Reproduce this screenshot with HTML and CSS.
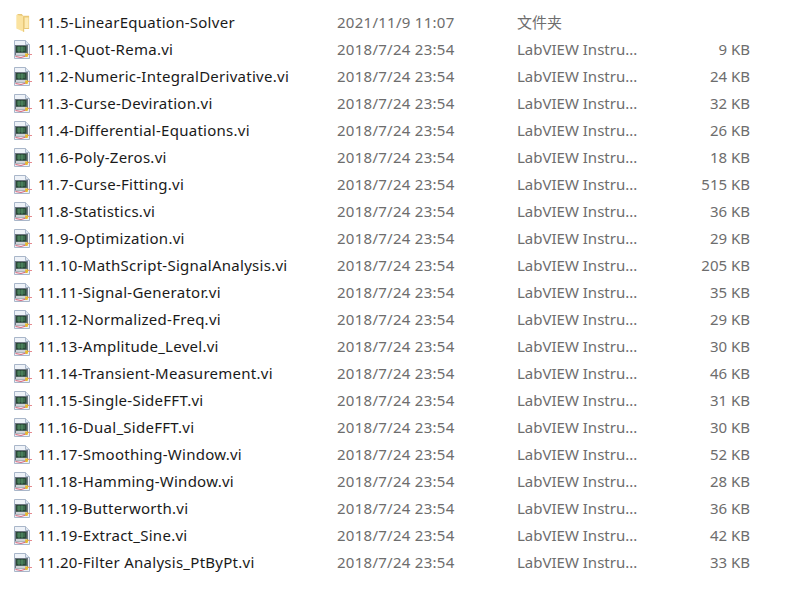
FILE: index.html
```html
<!DOCTYPE html>
<html lang="zh">
<head>
<meta charset="utf-8">
<title>Files</title>
<link rel="stylesheet" href="styles.css">
</head>
<body>
<svg class="defs" width="0" height="0">
<symbol id="folder" viewBox="0 0 16 18">
<path d="M3 1h4l1 1.500h5.500v12H3z" fill="#e9c878"/>
<path d="M2 1.500l7 1.500v14l-7-3z" fill="#fbe3a0"/>
<path d="M9 3v14l-1-.4V3z" fill="#e8c878"/>
<path d="M9.500 4h3.500v9.500H9.500z" fill="#fdebb4"/>
</symbol>
<symbol id="vi" viewBox="0 0 20 20">
<path d="M1.500 .5h11l4 4v14h-15z" fill="#eef2f8" stroke="#a9b6c9"/>
<path d="M12.500 .5v4h4" fill="#dfe6f0" stroke="#a9b6c9"/>
<rect x="2" y="5" width="13" height="10.500" fill="#6d7680"/>
<rect x="3" y="6" width="10.500" height="6.500" fill="#2a4a38"/>
<path d="M4 8h8M4 10h8M6 6.500v6M9 6.500v6" stroke="#63a877" stroke-width=".7"/>
<rect x="3" y="13" width="11" height="2" fill="#cfd3d8"/>
<path d="M2.500 16.500l5.500 1 5-1.500" stroke="#d9667a" stroke-width="1" fill="none"/>
<path d="M14 14.500h5" stroke="#e58a90" stroke-width="1"/>
<path d="M12 13.500h3.500l-1 3.500h-2z" fill="#e7bd2f"/>
</symbol>
</svg>
<main class="list">
<div class="row"><svg class="icon"><use href="#folder"/></svg><span class="name">11.5-LinearEquation-Solver</span><span class="date">2021/11/9 11:07</span><span class="type">文件夹</span><span class="size"></span></div>
<div class="row"><svg class="icon"><use href="#vi"/></svg><span class="name">11.1-Quot-Rema.vi</span><span class="date">2018/7/24 23:54</span><span class="type">LabVIEW Instru...</span><span class="size">9 KB</span></div>
<div class="row"><svg class="icon"><use href="#vi"/></svg><span class="name">11.2-Numeric-IntegralDerivative.vi</span><span class="date">2018/7/24 23:54</span><span class="type">LabVIEW Instru...</span><span class="size">24 KB</span></div>
<div class="row"><svg class="icon"><use href="#vi"/></svg><span class="name">11.3-Curse-Deviration.vi</span><span class="date">2018/7/24 23:54</span><span class="type">LabVIEW Instru...</span><span class="size">32 KB</span></div>
<div class="row"><svg class="icon"><use href="#vi"/></svg><span class="name">11.4-Differential-Equations.vi</span><span class="date">2018/7/24 23:54</span><span class="type">LabVIEW Instru...</span><span class="size">26 KB</span></div>
<div class="row"><svg class="icon"><use href="#vi"/></svg><span class="name">11.6-Poly-Zeros.vi</span><span class="date">2018/7/24 23:54</span><span class="type">LabVIEW Instru...</span><span class="size">18 KB</span></div>
<div class="row"><svg class="icon"><use href="#vi"/></svg><span class="name">11.7-Curse-Fitting.vi</span><span class="date">2018/7/24 23:54</span><span class="type">LabVIEW Instru...</span><span class="size">515 KB</span></div>
<div class="row"><svg class="icon"><use href="#vi"/></svg><span class="name">11.8-Statistics.vi</span><span class="date">2018/7/24 23:54</span><span class="type">LabVIEW Instru...</span><span class="size">36 KB</span></div>
<div class="row"><svg class="icon"><use href="#vi"/></svg><span class="name">11.9-Optimization.vi</span><span class="date">2018/7/24 23:54</span><span class="type">LabVIEW Instru...</span><span class="size">29 KB</span></div>
<div class="row"><svg class="icon"><use href="#vi"/></svg><span class="name">11.10-MathScript-SignalAnalysis.vi</span><span class="date">2018/7/24 23:54</span><span class="type">LabVIEW Instru...</span><span class="size">205 KB</span></div>
<div class="row"><svg class="icon"><use href="#vi"/></svg><span class="name">11.11-Signal-Generator.vi</span><span class="date">2018/7/24 23:54</span><span class="type">LabVIEW Instru...</span><span class="size">35 KB</span></div>
<div class="row"><svg class="icon"><use href="#vi"/></svg><span class="name">11.12-Normalized-Freq.vi</span><span class="date">2018/7/24 23:54</span><span class="type">LabVIEW Instru...</span><span class="size">29 KB</span></div>
<div class="row"><svg class="icon"><use href="#vi"/></svg><span class="name">11.13-Amplitude_Level.vi</span><span class="date">2018/7/24 23:54</span><span class="type">LabVIEW Instru...</span><span class="size">30 KB</span></div>
<div class="row"><svg class="icon"><use href="#vi"/></svg><span class="name">11.14-Transient-Measurement.vi</span><span class="date">2018/7/24 23:54</span><span class="type">LabVIEW Instru...</span><span class="size">46 KB</span></div>
<div class="row"><svg class="icon"><use href="#vi"/></svg><span class="name">11.15-Single-SideFFT.vi</span><span class="date">2018/7/24 23:54</span><span class="type">LabVIEW Instru...</span><span class="size">31 KB</span></div>
<div class="row"><svg class="icon"><use href="#vi"/></svg><span class="name">11.16-Dual_SideFFT.vi</span><span class="date">2018/7/24 23:54</span><span class="type">LabVIEW Instru...</span><span class="size">30 KB</span></div>
<div class="row"><svg class="icon"><use href="#vi"/></svg><span class="name">11.17-Smoothing-Window.vi</span><span class="date">2018/7/24 23:54</span><span class="type">LabVIEW Instru...</span><span class="size">52 KB</span></div>
<div class="row"><svg class="icon"><use href="#vi"/></svg><span class="name">11.18-Hamming-Window.vi</span><span class="date">2018/7/24 23:54</span><span class="type">LabVIEW Instru...</span><span class="size">28 KB</span></div>
<div class="row"><svg class="icon"><use href="#vi"/></svg><span class="name">11.19-Butterworth.vi</span><span class="date">2018/7/24 23:54</span><span class="type">LabVIEW Instru...</span><span class="size">36 KB</span></div>
<div class="row"><svg class="icon"><use href="#vi"/></svg><span class="name">11.19-Extract_Sine.vi</span><span class="date">2018/7/24 23:54</span><span class="type">LabVIEW Instru...</span><span class="size">42 KB</span></div>
<div class="row"><svg class="icon"><use href="#vi"/></svg><span class="name">11.20-Filter Analysis_PtByPt.vi</span><span class="date">2018/7/24 23:54</span><span class="type">LabVIEW Instru...</span><span class="size">33 KB</span></div>
</main>
</body>
</html>
```

FILE: styles.css
```css
html, body {
  margin: 0;
  background: #fff;
}
body {
  width: 788px;
  height: 603px;
  overflow: hidden;
  font-family: "Noto Sans", "Noto Sans CJK SC", sans-serif;
  font-size: 15px;
}
.defs {
  display: block;
  height: 0;
}
.list {
  padding: 9px 0 0 13px;
}
.row {
  display: grid;
  grid-template-columns: 25px 299px 180px 160px 73px;
  align-items: center;
  height: 27px;
  line-height: 27px;
  white-space: nowrap;
}
.icon {
  width: 20px;
  height: 20px;
}
.name {
  color: #1a1a1a;
  letter-spacing: 0.27px;
}
.date {
  color: #6d6d6d;
  letter-spacing: 0.27px;
}
.type, .size {
  color: #6d6d6d;
}
.size {
  text-align: right;
}
```
